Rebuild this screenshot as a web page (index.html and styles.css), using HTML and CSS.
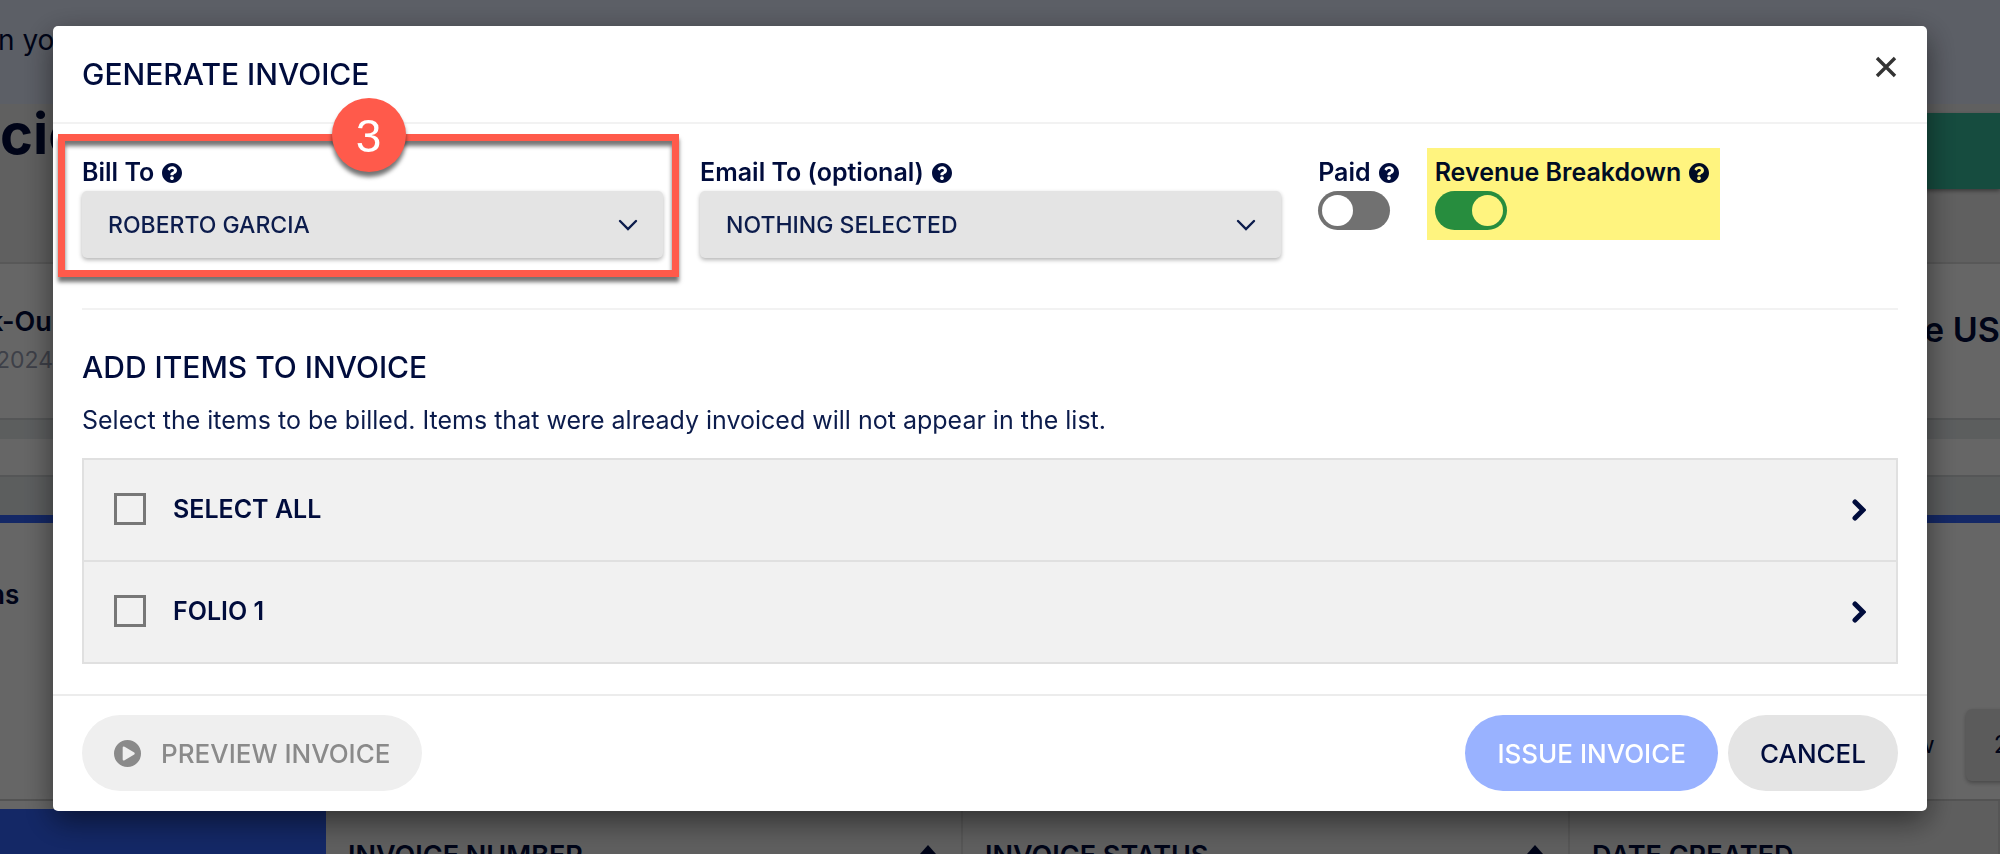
FILE: index.html
```html
<!DOCTYPE html>
<html lang="en">
<head>
<meta charset="utf-8">
<meta name="viewport" content="width=device-width, initial-scale=1">
<title>Generate Invoice</title>
<link rel="stylesheet" href="styles.css">
</head>
<body>
<svg class="sprite" aria-hidden="true">
  <symbol id="help" viewBox="8 8 496 496"><path d="M504 256c0 136.997-111.043 248-248 248S8 392.997 8 256C8 119.083 119.043 8 256 8s248 111.083 248 248zM262.655 90c-54.497 0-89.255 22.957-116.549 63.758-3.536 5.286-2.353 12.415 2.715 16.258l34.699 26.31c5.205 3.947 12.621 3.008 16.665-2.122 17.864-22.658 30.113-35.797 57.303-35.797 20.429 0 45.698 13.148 45.698 32.958 0 14.976-12.363 22.667-32.534 33.976C247.128 238.528 216 254.941 216 296v4c0 6.627 5.373 12 12 12h56c6.627 0 12-5.373 12-12v-1.333c0-28.462 83.186-29.647 83.186-106.667 0-58.002-60.165-102-116.531-102zM256 338c-25.365 0-46 20.635-46 46 0 25.364 20.635 46 46 46s46-20.636 46-46c0-25.364-20.635-46-46-46z"/></symbol>
  <symbol id="down" viewBox="0 0 20 12"><path d="M2 2l8 8 8-8" fill="none" stroke="currentColor" stroke-width="2.4" stroke-linecap="round" stroke-linejoin="miter"/></symbol>
  <symbol id="right" viewBox="0 0 14 22"><path d="M3 3l8 8-8 8" fill="none" stroke="currentColor" stroke-width="5" stroke-linecap="round" stroke-linejoin="miter"/></symbol>
  <symbol id="sort" viewBox="0 0 16 20"><path d="M0 9l8-9 8 9z"/></symbol>
</svg>

<div class="page">
  <div class="promo">n yo</div>
  <div class="page-head">
    <h1>cio</h1>
    <button class="page-action" type="button" aria-label="Page action"></button>
  </div>
  <div class="summary">
    <div class="summary-item"><strong>k-Ou</strong><span>2024</span></div>
    <div class="summary-total">e USD</div>
  </div>
  <div class="band"></div>
  <div class="strip"></div>
  <div class="tabs"></div>
  <div class="content">
    <strong class="content-label">ns</strong>
    <div class="pager"><span>w</span><span class="pager-size">2</span></div>
  </div>
  <div class="table-head">
    <div class="th th-blue"></div>
    <div class="th">INVOICE NUMBER<svg><use href="#sort"/></svg></div>
    <div class="th">INVOICE STATUS<svg><use href="#sort"/></svg></div>
    <div class="th">DATE CREATED</div>
  </div>
</div>

<div class="overlay">
  <section class="modal" role="dialog" aria-modal="true" aria-labelledby="title">
    <header class="modal-head">
      <h2 class="heading" id="title">GENERATE INVOICE</h2>
      <button class="close" type="button" aria-label="Close">
        <svg viewBox="0 0 24 24"><path d="M3 3l18 18M21 3L3 21" stroke="currentColor" stroke-width="3.4"/></svg>
      </button>
    </header>

    <div class="modal-body">
      <div class="fields">
        <div class="field">
          <label class="label" for="bill">Bill To <svg><use href="#help"/></svg></label>
          <div class="select">
            <select id="bill"><option>ROBERTO GARCIA</option></select>
            <svg><use href="#down"/></svg>
          </div>
          <div class="callout"><span class="callout-number">3</span></div>
        </div>
        <div class="field">
          <label class="label" for="email">Email To (optional) <svg><use href="#help"/></svg></label>
          <div class="select">
            <select id="email"><option>NOTHING SELECTED</option></select>
            <svg><use href="#down"/></svg>
          </div>
        </div>
        <div class="switches">
          <div class="field">
            <label class="label" for="paid">Paid <svg><use href="#help"/></svg></label>
            <input class="switch" id="paid" type="checkbox">
          </div>
          <div class="field marked">
            <label class="label" for="revenue">Revenue Breakdown <svg><use href="#help"/></svg></label>
            <input class="switch" id="revenue" type="checkbox" checked>
          </div>
        </div>
      </div>

      <div class="items">
        <h3 class="heading">ADD ITEMS TO INVOICE</h3>
        <p class="hint">Select the items to be billed. Items that were already invoiced will not appear in the list.</p>
        <ul class="list">
          <li class="row">
            <label class="pick"><input class="box" type="checkbox">SELECT ALL</label>
            <button class="expand" type="button" aria-label="Expand all"><svg><use href="#right"/></svg></button>
          </li>
          <li class="row">
            <label class="pick"><input class="box" type="checkbox">FOLIO 1</label>
            <button class="expand" type="button" aria-label="Expand folio 1"><svg><use href="#right"/></svg></button>
          </li>
        </ul>
      </div>
    </div>

    <footer class="modal-foot">
      <button class="btn btn-preview" type="button" disabled>
        <svg viewBox="0 0 28 28"><path fill-rule="evenodd" d="M14 0a14 14 0 1 1 0 28a14 14 0 0 1 0-28zM9 8v12q0 2 2 1l10-6q1-1 0-2L11 7q-2-1-2 1z"/></svg>
        PREVIEW INVOICE
      </button>
      <button class="btn btn-issue" type="button" disabled>ISSUE INVOICE</button>
      <button class="btn btn-cancel" type="button">CANCEL</button>
    </footer>
  </section>
</div>
</body>
</html>
```
FILE: styles.css
```css
* { box-sizing: border-box; }

body {
  margin: 0;
  height: 100vh;
  overflow: hidden;
  color: #000c3c;
  background: #fff;
  font-family: Inter, "Open Sans", sans-serif;
}

h1, h2, h3, p, ul { margin: 0; padding: 0; }
button, select { font: inherit; color: inherit; border: 0; }
svg { fill: currentColor; flex: none; }
.sprite { display: none; }

/* Page behind the dialog */
.page { height: 100vh; overflow: hidden; display: flex; flex-direction: column; }
.page > * { flex: none; }
.promo { height: 104px; padding-top: 22px; background: #e6edff; font-size: 28px; line-height: 36px; text-indent: -2px; }
.page-head { height: 160px; display: flex; justify-content: space-between; background: #f0f0f0; border-bottom: 2px solid #dcdcdc; }
.page-head h1 { font-size: 56px; line-height: 60px; font-weight: 700; }
.page-action { width: 88px; height: 76px; margin-top: 9px; background: #37be9e; box-shadow: 0 2px 4px rgba(0, 0, 0, .4); }
.summary { height: 154px; display: flex; justify-content: space-between; }
.summary-item { display: flex; flex-direction: column; gap: 4px; padding-top: 41px; margin-left: -12px; font-size: 27px; line-height: 34px; }
.summary-item strong { font-weight: 600; }
.summary-item span { margin-left: 8px; font-size: 23px; color: #9aa0b4; }
.summary-total { width: 76px; padding-top: 44px; font-size: 34px; line-height: 44px; font-weight: 600; white-space: nowrap; }
.band { height: 21px; background: #e6eaec; border-top: 2px solid #d4d8da; }
.strip { height: 36px; }
.tabs { height: 48px; background: #e6eaec; border-top: 2px solid #d4d8da; border-bottom: 8px solid #3264ff; }
.content { height: 278px; display: flex; justify-content: space-between; border-bottom: 2px solid #d0d0d0; }
.content-label { padding-top: 55px; margin-left: -11px; font-size: 26px; line-height: 34px; font-weight: 600; }
.pager { display: flex; align-items: flex-end; gap: 31px; width: 85px; padding-bottom: 18px; font-size: 24px; line-height: 72px; }
.pager-size { flex: none; width: 80px; padding-left: 28px; background: #e4e4e4; border-radius: 6px; box-shadow: 0 2px 4px rgba(0, 0, 0, .3); }
.table-head { flex: 1; display: grid; grid-template-columns: 326fr 637fr 607fr 430fr; }
.th { display: flex; justify-content: space-between; padding: 39px 24px 0 22px; background: #ececec; font-size: 27px; line-height: 32px; font-weight: 600; border-right: 2px solid #d8d8d8; white-space: nowrap; }
.th svg { width: 18px; height: 20px; margin-top: 5px; }
.th-blue { margin-top: 8px; background: #3264ff; border: 0; }

/* Dialog */
.overlay { position: fixed; inset: 0; padding: 26px 73px 0 53px; background: rgba(0, 0, 0, .6); }
.modal { background: #fff; border-radius: 5px; box-shadow: 0 10px 30px rgba(0, 0, 0, .5); }
.modal-head { display: flex; justify-content: space-between; align-items: flex-start; padding: 26px 29px 26px 29px; border-bottom: 2px solid #f2f2f2; }
.heading { font-size: 30px; line-height: 44px; font-weight: 500; }
.close { width: 24px; height: 24px; padding: 0; margin-top: 3px; background: none; color: #333; }
.close svg { display: block; width: 24px; height: 24px; }
.modal-body { padding: 24px 29px 30px; }

.fields { display: grid; grid-template-columns: 32% 32% 1fr; gap: 37px; padding-bottom: 50px; }
.field { position: relative; padding-top: 10px; }
.label { display: flex; align-items: center; gap: 8px; height: 33px; padding-bottom: 4px; font-size: 25px; line-height: 29px; font-weight: 600; white-space: nowrap; }
.label svg { width: 20px; height: 20px; }
.select { position: relative; color: #0c1c4c; }
.select select { display: block; width: 100%; height: 67px; padding: 0 26px; appearance: none; background: #e4e4e4; border-radius: 5px; box-shadow: 0 2px 4px rgba(0, 0, 0, .3); font-size: 23px; font-weight: 500; }
.select svg { position: absolute; right: 25px; top: 28px; width: 20px; height: 12px; pointer-events: none; }

.switches { display: flex; align-items: flex-start; gap: 28px; }
.switch { display: block; appearance: none; width: 72px; height: 39px; margin: 0; padding: 4px; border-radius: 20px; background: #717171; }
.switch::before { content: ""; display: block; width: 31px; height: 31px; border-radius: 50%; background: #fff; }
.switch:checked { background: #278d3e; }
.switch:checked::before { margin-left: auto; background: #fff47f; }
.marked { padding: 10px 11px 10px 8px; background: #fff47f; color: #000c24; }

/* Annotation over the first field */
.callout { position: absolute; inset: -14px -16px -19px -24px; border: 7px solid #ff5a4b; box-shadow: 0 5px 4px rgba(0, 0, 0, .55), inset 0 5px 4px rgba(0, 0, 0, .55); pointer-events: none; display: flex; justify-content: center; align-items: flex-start; }
.callout-number { flex: none; width: 74px; height: 74px; margin-top: -43px; border-radius: 50%; background: #ff5a4b; box-shadow: 0 5px 4px rgba(0, 0, 0, .55); color: #fff; font: 46px/76px "Liberation Sans", Arial, sans-serif; text-align: center; }

.items { padding-top: 35px; border-top: 2px solid #f2f2f2; }
.hint { margin-top: 14px; font-size: 25px; line-height: 34px; color: #0c1c4c; }
.list { margin-top: 21px; list-style: none; border: 2px solid #e0e0e0; background: #f1f1f1; }
.row { display: flex; justify-content: space-between; align-items: center; height: 100px; padding: 0 30px; }
.row + .row { height: 102px; border-top: 2px solid #e0e0e0; }
.pick { display: flex; align-items: center; gap: 27px; padding-bottom: 3px; font-size: 25px; font-weight: 600; }
.box { appearance: none; width: 32px; height: 32px; margin: 0; border: 3px solid #777; }
.expand { padding: 0; background: none; }
.expand svg { display: block; width: 14px; height: 22px; }

.modal-foot { display: flex; gap: 10px; padding: 19px 29px 20px; border-top: 2px solid #ececec; }
.btn { display: flex; align-items: center; gap: 20px; height: 76px; padding: 0 32px; border-radius: 38px; font-size: 26px; font-weight: 500; white-space: nowrap; }
.btn-preview { margin-right: auto; background: #efefef; color: #8a8a8a; }
.btn-preview svg { width: 27px; height: 27px; }
.btn-issue { background: #99b2ff; color: #fff; }
.btn-cancel { background: #e4e4e4; }
```
